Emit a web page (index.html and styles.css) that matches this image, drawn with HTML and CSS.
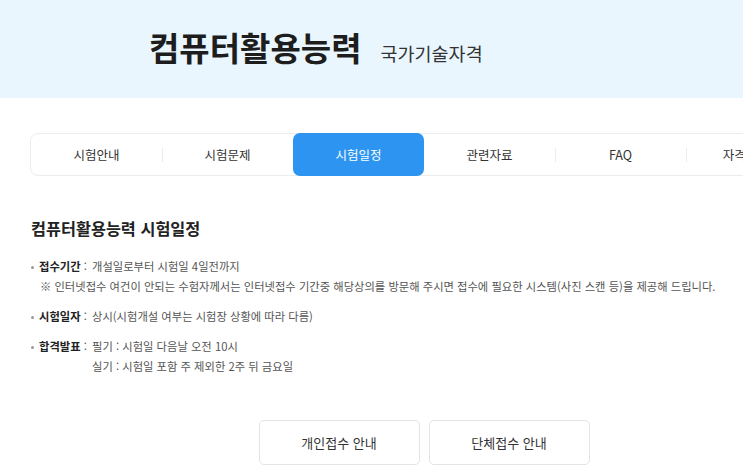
FILE: index.html
```html
<!DOCTYPE html>
<html lang="ko">
<head>
<meta charset="utf-8">
<title>컴퓨터활용능력 시험일정</title>
<link rel="stylesheet" href="styles.css">
</head>
<body>
<header class="hero">
  <div class="hero-inner">
    <h1 class="hero-title">컴퓨터활용능력</h1>
    <span class="hero-sub">국가기술자격</span>
  </div>
</header>
<main class="wrap">
  <nav class="tabs">
    <a class="tab">시험안내</a>
    <a class="tab">시험문제</a>
    <a class="tab active">시험일정</a>
    <a class="tab">관련자료</a>
    <a class="tab">FAQ</a>
    <a class="tab">자격증안내</a>
  </nav>
  <h2 class="sec-title">컴퓨터활용능력 시험일정</h2>
  <ul class="info">
    <li class="item">
      <div class="row">
        <span class="label"><b>접수기간</b> :</span>
        <span class="val">개설일로부터 시험일 4일전까지</span>
      </div>
      <p class="note">※ 인터넷접수 여건이 안되는 수험자께서는 인터넷접수 기간중 해당상의를 방문해 주시면 접수에 필요한 시스템(사진 스캔 등)을 제공해 드립니다.</p>
    </li>
    <li class="item">
      <div class="row">
        <span class="label"><b>시험일자</b> :</span>
        <span class="val">상시(시험개설 여부는 시험장 상황에 따라 다름)</span>
      </div>
    </li>
    <li class="item">
      <div class="row">
        <span class="label"><b>합격발표</b> :</span>
        <span class="val">필기 : 시험일 다음날 오전 10시<br>실기 : 시험일 포함 주 제외한 2주 뒤 금요일</span>
      </div>
    </li>
  </ul>
  <div class="btns">
    <a class="btn">개인접수 안내</a>
    <a class="btn">단체접수 안내</a>
  </div>
</main>
</body>
</html>
```

FILE: styles.css
```css
html, body {
  margin: 0;
  padding: 0;
  overflow: hidden;
  background: #fff;
}
body {
  font-family: "Noto Sans CJK KR", "Noto Sans", sans-serif;
  color: #444;
  width: 743px;
}
.hero {
  background: #eaf6fe;
  height: 98px;
  display: flex;
  align-items: center;
}
.hero-inner {
  display: flex;
  align-items: baseline;
  padding-left: 149px;
  margin-top: -2px;
}
.hero-title {
  margin: 0;
  font-size: 33px;
  line-height: 1.2;
  font-weight: 700;
  color: #1d1d1d;
  letter-spacing: 0;
}
.hero-sub {
  margin-left: 19px;
  font-size: 18.5px;
  color: #333;
  letter-spacing: 0;
}
.wrap {
  width: 788px;
  margin-left: 30px;
  padding-top: 35px;
}
.tabs {
  display: flex;
  height: 43px;
  box-sizing: border-box;
  border: 1px solid #ececec;
  border-radius: 8px;
  background: #fff;
}
.tab {
  flex: 1;
  display: flex;
  align-items: center;
  justify-content: center;
  font-size: 12.5px;
  color: #333;
  position: relative;
}
.tab + .tab::before {
  content: "";
  position: absolute;
  left: 0;
  top: 14px;
  height: 14px;
  width: 1px;
  background: #ececec;
}
.tab.active {
  background: #2d95f1;
  color: #fff;
  border-radius: 7px;
  margin: -1px 0;
}
.tab.active::before,
.tab.active + .tab::before {
  display: none;
}
.sec-title {
  margin: 42px 0 0 1px;
  font-size: 16.3px;
  line-height: 20px;
  font-weight: 700;
  color: #222;
}
.info {
  list-style: none;
  margin: 18px 0 0 0;
  padding: 0;
  font-size: 11.3px;
  line-height: 20px;
  letter-spacing: 0;
  color: #555;
}
.item {
  position: relative;
  margin-bottom: 10px;
}
.item::before {
  content: "";
  position: absolute;
  left: 1px;
  top: 10px;
  width: 3px;
  height: 3px;
  border-radius: 50%;
  background: #999;
}
.row {
  display: flex;
}
.label {
  width: 53px;
  padding-left: 9px;
  flex: none;
  color: #555;
}
.label b {
  color: #222;
  font-weight: 700;
}
.val {
  display: block;
}
.note {
  margin: 0;
  padding-left: 10px;
}
.btns {
  display: flex;
  justify-content: center;
  gap: 9px;
  margin-top: 44px;
}
.btn {
  width: 161px;
  height: 45px;
  box-sizing: border-box;
  border: 1px solid #e4e4e4;
  border-radius: 5px;
  display: flex;
  align-items: center;
  justify-content: center;
  font-size: 13px;
  color: #333;
  background: #fff;
}
```
